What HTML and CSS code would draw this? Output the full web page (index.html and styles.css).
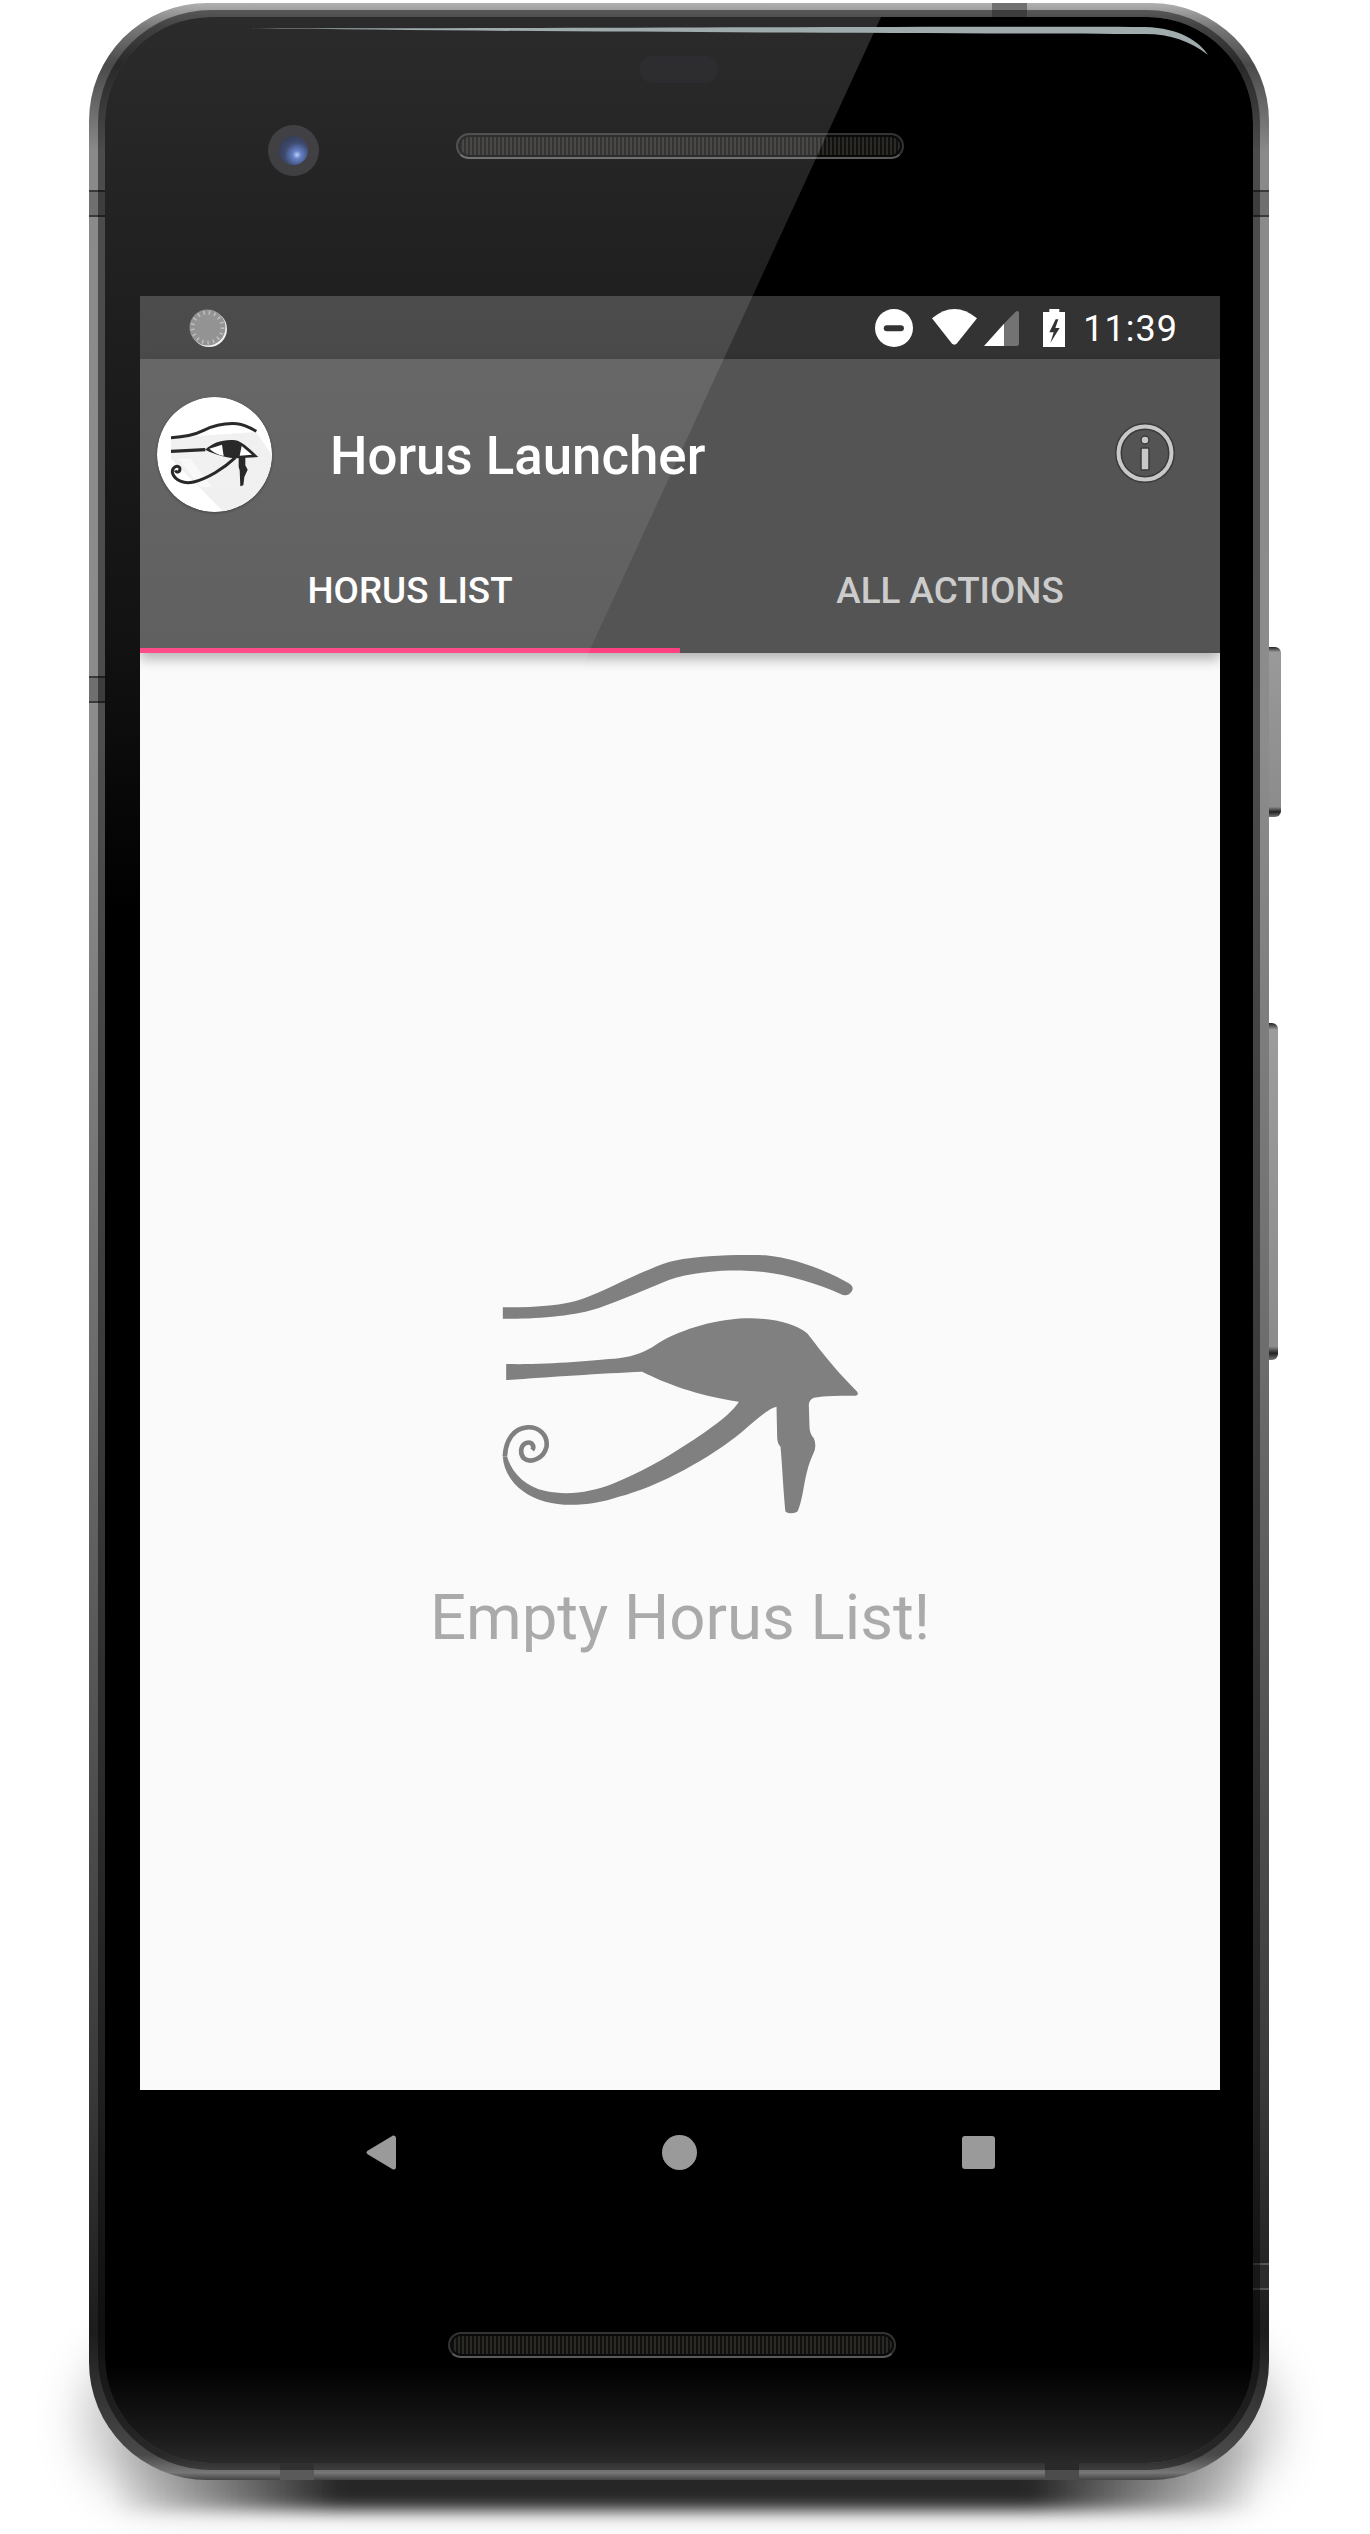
FILE: index.html
```html
<!DOCTYPE html>
<html lang="en">
<head>
	<meta charset="utf-8">
	<title>Horus Launcher</title>
	<link rel="stylesheet" href="styles.css">
</head>
<body>
	<div class="stage">
		<div class="shadow-wide"></div>
		<div class="shadow-tight"></div>

		<div class="phone">
			<span class="band band-left-top"></span>
			<span class="band band-right-top"></span>
			<span class="band band-left-mid"></span>
			<span class="band band-right-low"></span>
			<span class="band band-top"></span>
			<span class="band band-bottom-left"></span>
			<span class="band band-bottom-right"></span>
			<span class="key key-power"></span>
			<span class="key key-volume"></span>

			<div class="glass">
				<div class="bezel-top">
					<div class="sensor"></div>
					<div class="earpiece-row">
						<div class="camera"><div class="lens"></div></div>
						<div class="speaker"></div>
					</div>
				</div>

				<div class="screen">
					<div class="status-bar">
						<svg class="status-dot" viewBox="0 0 38 38">
							<circle cx="20" cy="20" r="18" fill="#f0f0f0"/>
							<circle cx="18.500" cy="18.500" r="18" fill="#858585"/>
							<circle cx="18.500" cy="18.500" r="15" fill="none" stroke="#b5b5b5" stroke-width="4" stroke-dasharray="1.500 4"/>
						</svg>
						<div class="status-right">
							<svg class="ic-dnd" viewBox="107 55 113 113">
								<circle cx="163.500" cy="111.500" r="56.500" fill="#fff"/>
								<rect x="133" y="103" width="60" height="18" rx="9" fill="#333"/>
							</svg>
							<svg class="ic-wifi" viewBox="275 57 135 111">
								<path d="M275 85Q342 29 410 85L350 160Q342 168 334 160Z" fill="#fff"/>
							</svg>
							<svg class="ic-signal" viewBox="432 62 105 105">
								<path d="M492 100L527 64Q537 58 537 72V160Q537 167 530 167H492Z" fill="#737373"/>
								<path d="M432 167L492 100V167Z" fill="#fff"/>
							</svg>
							<svg class="ic-battery" viewBox="606 53 66 114">
								<path d="M625 53H655V62H672V167H606V62H625Z" fill="#fff"/>
								<path d="M644 84L625 123H638L628 155L656 110H643L652 84Z" fill="#333"/>
							</svg>
							<span class="clock">11:39</span>
						</div>
					</div>

					<div class="app-bar">
						<div class="toolbar">
							<svg class="app-icon" viewBox="50 50 345 345">
								<clipPath id="disc"><circle cx="222.500" cy="222.500" r="172.500"/></clipPath>
								<circle cx="222.500" cy="222.500" r="172.500" fill="#fff"/>
								<polygon points="92,172 348,155 395,225 395,395 250,395 92,235" fill="#efefef" clip-path="url(#disc)"/>
								<polygon points="115,235 150,235 215,320 180,320" fill="#f8f8f8"/>
								<!-- brow and lid lines -->
								<path d="M92 172C130 170 160 165 190 150C220 135 260 128 290 130C310 132 330 142 348 153" fill="none" stroke="#111" stroke-width="9"/>
								<path d="M92 213L195 208" fill="none" stroke="#111" stroke-width="10"/>
								<path d="M195 208C215 188 250 176 285 180C305 183 330 208 354 230L290 234C265 234 225 224 195 208Z" fill="#111"/>
								<path d="M207 205L245 193L250 227Q225 222 207 205Z" fill="#fff"/>
								<path d="M304 197L335 223L298 226Z" fill="#fff"/>
								<path d="M285 232C250 265 200 295 160 305C130 312 105 300 97 280C92 262 110 252 118 262C122 275 108 280 105 270" fill="none" stroke="#111" stroke-width="9"/>
								<path d="M295 228L315 228L315 255L322 268L312 290L309 315L300 318L298 270L295 260Z" fill="#111"/>
							</svg>
							<h1 class="app-title">Horus Launcher</h1>
							<svg class="info-icon" viewBox="0 0 60 60">
								<circle cx="30" cy="30" r="26.500" fill="none" stroke="#3a3a3a" stroke-width="7"/>
								<circle cx="30" cy="30" r="26.500" fill="none" stroke="#c8c8c8" stroke-width="4"/>
								<rect x="26" y="25" width="8" height="22" rx="1" fill="#c8c8c8" stroke="#3a3a3a" stroke-width="1.500"/>
								<circle cx="30" cy="17" r="4" fill="#c8c8c8" stroke="#3a3a3a" stroke-width="1.500"/>
							</svg>
						</div>
						<div class="tabs">
							<div class="tab tab-active">HORUS LIST</div>
							<div class="tab">ALL ACTIONS</div>
						</div>
					</div>

					<div class="empty">
						<svg class="empty-eye" viewBox="70 75 1070 780">
							<path d="M72 232C170 232 250 228 310 207C390 178 470 130 570 96C640 78 760 72 860 76C950 84 1050 125 1110 160Q1128 172 1118 185Q1105 202 1085 192C1000 155 900 125 800 122C720 120 640 127 570 150C500 178 430 210 360 234C290 258 170 268 72 266ZM82 402C200 405 340 392 420 385C470 378 500 365 530 345C590 305 700 268 800 265C880 263 950 280 985 310C1010 340 1050 400 1135 485Q1142 497 1125 497C1080 497 1040 497 1005 503Q990 510 990 525L992 590Q992 610 1005 625Q1015 650 1003 672C990 700 985 720 975 770C970 800 962 835 955 845Q935 855 920 845C915 800 910 700 905 650Q895 640 895 620L893 530C870 535 830 570 790 605C700 680 540 770 420 800C350 825 260 832 200 815C125 795 75 740 72 680L85 680C100 730 140 770 200 783C270 798 340 785 400 762C480 730 560 685 620 645C690 600 760 550 780 515C650 495 560 460 490 425C370 430 200 442 82 450Z" fill="#808080"/>
							<path d="M160 660C168 650 160 635 145 638C125 642 122 670 135 685C155 702 195 685 203 650C208 615 180 590 145 592C105 595 80 630 78 680" fill="none" stroke="#808080" stroke-width="14"/>
						</svg>
						<p class="empty-text">Empty Horus List!</p>
					</div>
				</div>

				<div class="nav-bar">
					<svg class="nav-back" viewBox="0 0 30 35">
						<path d="M27 .5Q30 0 30 3V32Q30 35 27 34.500L2 19.500Q-1 17.500 2 15.500Z" fill="#9a9a9a"/>
					</svg>
					<div class="nav-home"></div>
					<div class="nav-recent"></div>
				</div>

				<div class="bezel-bottom">
					<div class="speaker"></div>
				</div>

				<div class="glare"></div>
				<svg class="streak" viewBox="0 0 1148 60">
					<path d="M142 11C400 12 800 9 1040 10C1075 11 1095 25 1103 38C1085 24 1065 17 1040 17C800 16 400 15 142 11Z" fill="#9fabad"/>
				</svg>
			</div>
		</div>
	</div>
</body>
</html>
```

FILE: styles.css
```css
*{
	margin:0;
	padding:0;
	box-sizing:border-box;
}
html,body{
	background:#fff;
}
body{
	width:1370px;
	height:2534px;
	overflow:hidden;
	font-family:Roboto,"Noto Sans",sans-serif;
}
.stage{
	position:relative;
	height:2534px;
	padding:3px 0 0 89px;
}

/* shadows under the handset */
.shadow-wide{
	position:absolute;
	left:85px;
	top:2340px;
	width:1190px;
	height:160px;
	border-radius:110px;
	background:rgba(0,0,0,.24);
	filter:blur(24px);
}
.shadow-tight{
	position:absolute;
	left:110px;
	top:2440px;
	width:1150px;
	height:70px;
	background:linear-gradient(90deg,rgba(34,34,34,0) 0,#262626 20%,#262626 80%,rgba(34,34,34,0) 100%);
	filter:blur(8px);
}

/* body */
.phone{
	position:relative;
	width:1180px;
	height:2477px;
	padding:14px 16px 17px;
	border-radius:118px;
	background:linear-gradient(180deg,#b0b0b0 0,#777 1%,#4a4a4a 2.500%,#8a8a8a 6%,#8c8c8c 30%,#6c6c6c 55%,#3a3a3a 84%,#1c1c1c 94%,#4a4a4a 99%,#777 99.700%,#444 100%);
}
.band{
	position:absolute;
	background:#6f6f6f;
}
.band-left-top,
.band-right-top,
.band-left-mid,
.band-right-low{
	width:16px;
	height:27px;
	border:solid #3a3a3a;
	border-width:2px 0;
}
.band-left-top{
	left:0;
	top:187px;
}
.band-right-top{
	right:0;
	top:187px;
}
.band-left-mid{
	left:0;
	top:673px;
}
.band-right-low{
	right:0;
	top:2260px;
	background:#2c2c2c;
	border-color:#555;
}
.band-top{
	left:903px;
	top:0;
	width:35px;
	height:14px;
	background:#707070;
}
.band-bottom-left{
	left:191px;
	bottom:0;
	width:34px;
	height:17px;
	background:#5a5a5a;
}
.band-bottom-right{
	right:190px;
	bottom:0;
	width:34px;
	height:17px;
	background:#4c4c4c;
}
.key{
	position:absolute;
	left:100%;
	border-radius:0 6px 6px 0;
	background:linear-gradient(180deg,#222 0,#999 3%,#8c8c8c 94%,#222 97%,#777 100%);
}
.key-power{
	top:644px;
	width:12px;
	height:170px;
}
.key-volume{
	top:1020px;
	width:9px;
	height:337px;
	background:linear-gradient(180deg,#222 0,#9c9c9c 2%,#8c8c8c 96%,#222 98%,#777 100%);
}
.glass{
	position:relative;
	height:100%;
	overflow:hidden;
	border-radius:106px;
	background:linear-gradient(180deg,#000 0,#000 96%,#1b1b1b 99%,#2a2a2a 100%);
	box-shadow:0 0 0 7px rgba(0,0,0,.45);
}

/* top bezel */
.bezel-top{
	height:279px;
	padding-top:39px;
}
.sensor{
	width:78px;
	height:27px;
	margin-left:535px;
	border-radius:13px;
	background:#050509;
}
.earpiece-row{
	display:flex;
	align-items:center;
	height:50px;
	margin-top:42px;
}
.camera{
	display:flex;
	align-items:center;
	justify-content:center;
	flex:none;
	width:51px;
	height:51px;
	margin-left:163px;
	border-radius:50%;
	background:#202024;
}
.lens{
	width:29px;
	height:29px;
	border-radius:50%;
	background:radial-gradient(circle at 62% 65%,#b0c6f2 0,#4a6bbd 16%,#1c2a55 48%,#0a0f22 100%);
}
.speaker{
	flex:none;
	width:448px;
	height:26px;
	margin-left:137px;
	border:2px solid #333;
	border-bottom-color:#5a5a5a;
	border-radius:13px;
	background:repeating-linear-gradient(90deg,#2c2a25 0,#2c2a25 2px,#111 2px,#111 4px);
	box-shadow:inset 0 0 0 2px #0a0a0a;
}
.earpiece-row .speaker{
	align-self:flex-start;
	margin-top:8px;
}

/* screen */
.screen{
	display:flex;
	flex-direction:column;
	height:1794px;
	margin:0 33px 0 35px;
	background:#fafafa;
}
.status-bar{
	display:flex;
	align-items:center;
	justify-content:space-between;
	flex:none;
	height:63px;
	padding:0 42px 0 49px;
	background:#333;
}
.status-dot{
	width:38px;
	height:38px;
}
.status-right{
	display:flex;
	align-items:center;
	height:38px;
}
.ic-dnd{
	width:38px;
	height:38px;
}
.ic-wifi{
	width:45px;
	height:37px;
	margin-left:19px;
}
.ic-signal{
	width:35px;
	height:35px;
	margin:1px 0 0 7px;
}
.ic-battery{
	width:22px;
	height:38px;
	margin-left:24.500px;
}
.clock{
	margin:2px 0 0 18px;
	color:#fff;
	font-size:36px;
	line-height:38px;
	letter-spacing:1px;
}
.app-bar{
	position:relative;
	z-index:1;
	flex:none;
	height:294px;
	background:#545454;
	box-shadow:0 6px 12px rgba(0,0,0,.3);
}
.toolbar{
	display:flex;
	align-items:center;
	height:169px;
	padding:0 45px 0 17px;
}
.app-icon{
	flex:none;
	width:115px;
	height:115px;
	margin-top:22px;
	border-radius:50%;
	box-shadow:0 1px 3px rgba(0,0,0,.4);
}
.app-title{
	flex:1;
	margin:24px 0 0 58px;
	color:#fff;
	font-size:52.800px;
	font-weight:500;
	line-height:60px;
}
.info-icon{
	flex:none;
	width:60px;
	height:60px;
	margin-top:18px;
}
.tabs{
	display:flex;
	height:125px;
}
.tab{
	flex:1;
	padding-top:41px;
	color:#ccc;
	font-size:36.800px;
	font-weight:500;
	line-height:44px;
	text-align:center;
}
.tab-active{
	color:#fff;
	border-bottom:5px solid #ff4081;
}
.empty{
	display:flex;
	flex-direction:column;
	align-items:center;
	flex:1;
	padding-top:602px;
}
.empty-eye{
	width:357px;
	height:260px;
}
.empty-text{
	margin-top:66px;
	color:#aaa;
	font-size:63.500px;
	line-height:74px;
}

/* navigation */
.nav-bar{
	display:flex;
	align-items:center;
	justify-content:center;
	height:159px;
	padding-bottom:34px;
	margin:0 33px 0 35px;
}
.nav-back{
	width:30px;
	height:35px;
	margin-right:266px;
}
.nav-home{
	width:35px;
	height:35px;
	border-radius:50%;
	background:#9a9a9a;
}
.nav-recent{
	width:33px;
	height:33px;
	margin-left:265px;
	border-radius:3px;
	background:#9a9a9a;
}
.bezel-bottom{
	padding-top:83px;
}
.bezel-bottom .speaker{
	margin-left:343px;
}

/* reflections lying over the glass */
.glare{
	position:absolute;
	z-index:2;
	left:0;
	top:0;
	width:800px;
	height:900px;
	background:linear-gradient(180deg,rgba(255,255,255,.17) 0,rgba(255,255,255,.12) 32%,rgba(255,255,255,.07) 70%,rgba(255,255,255,0) 100%);
	clip-path:polygon(0 0,776px 0,362px 900px,0 900px);
	pointer-events:none;
}
.streak{
	position:absolute;
	z-index:3;
	left:0;
	top:0;
	width:1148px;
	height:60px;
}
```
